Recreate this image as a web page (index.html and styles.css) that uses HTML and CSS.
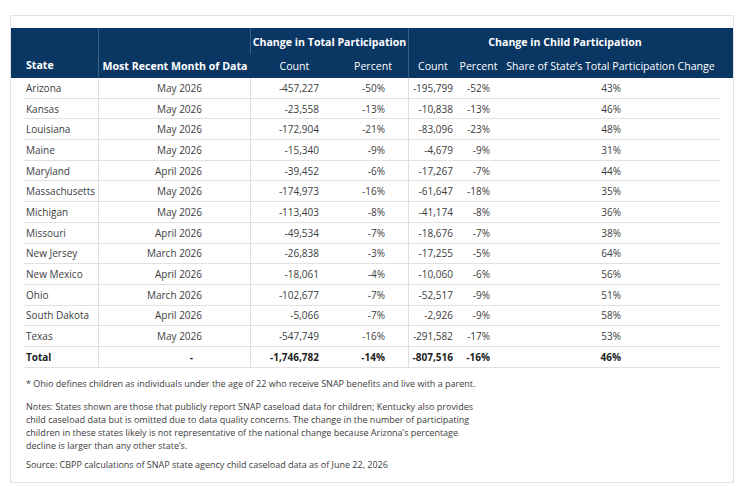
FILE: index.html
```html
<!DOCTYPE html>
<html lang="en">
<head>
    <meta charset="UTF-8">
    <meta name="viewport" content="width=device-width, initial-scale=1.0">
    <title>SNAP Child Participation</title>
    <link rel="stylesheet" href="styles.css">
</head>
<body>
    <div class="card">
        <table class="data">
            <colgroup>
                <col class="c-state">
                <col class="c-month">
                <col class="c-count">
                <col class="c-pct">
                <col class="c-ccount">
                <col class="c-cpct">
                <col class="c-share">
            </colgroup>
            <thead>
                <tr class="group-row">
                    <th rowspan="2" class="h-state edge-left sep">State</th>
                    <th class="sep"></th>
                    <th colspan="2" class="sep">Change in Total Participation</th>
                    <th colspan="3" class="edge-right">Change in Child Participation</th>
                </tr>
                <tr class="sub-row">
                    <th class="h-month">Most Recent Month of Data</th>
                    <th class="light">Count</th>
                    <th class="light sep">Percent</th>
                    <th class="light">Count</th>
                    <th class="light">Percent</th>
                    <th class="light edge-right">Share of State’s Total Participation Change</th>
                </tr>
            </thead>
            <tbody>
                <tr><td class="state">Arizona</td><td class="month">May 2026</td><td class="count">-457,227</td><td class="pct">-50%</td><td class="ccount">-195,799</td><td class="cpct">-52%</td><td class="share">43%</td></tr>
                <tr><td class="state">Kansas</td><td class="month">May 2026</td><td class="count">-23,558</td><td class="pct">-13%</td><td class="ccount">-10,838</td><td class="cpct">-13%</td><td class="share">46%</td></tr>
                <tr><td class="state">Louisiana</td><td class="month">May 2026</td><td class="count">-172,904</td><td class="pct">-21%</td><td class="ccount">-83,096</td><td class="cpct">-23%</td><td class="share">48%</td></tr>
                <tr><td class="state">Maine</td><td class="month">May 2026</td><td class="count">-15,340</td><td class="pct">-9%</td><td class="ccount">-4,679</td><td class="cpct">-9%</td><td class="share">31%</td></tr>
                <tr><td class="state">Maryland</td><td class="month">April 2026</td><td class="count">-39,452</td><td class="pct">-6%</td><td class="ccount">-17,267</td><td class="cpct">-7%</td><td class="share">44%</td></tr>
                <tr><td class="state">Massachusetts</td><td class="month">May 2026</td><td class="count">-174,973</td><td class="pct">-16%</td><td class="ccount">-61,647</td><td class="cpct">-18%</td><td class="share">35%</td></tr>
                <tr><td class="state">Michigan</td><td class="month">May 2026</td><td class="count">-113,403</td><td class="pct">-8%</td><td class="ccount">-41,174</td><td class="cpct">-8%</td><td class="share">36%</td></tr>
                <tr><td class="state">Missouri</td><td class="month">April 2026</td><td class="count">-49,534</td><td class="pct">-7%</td><td class="ccount">-18,676</td><td class="cpct">-7%</td><td class="share">38%</td></tr>
                <tr><td class="state">New Jersey</td><td class="month">March 2026</td><td class="count">-26,838</td><td class="pct">-3%</td><td class="ccount">-17,255</td><td class="cpct">-5%</td><td class="share">64%</td></tr>
                <tr><td class="state">New Mexico</td><td class="month">April 2026</td><td class="count">-18,061</td><td class="pct">-4%</td><td class="ccount">-10,060</td><td class="cpct">-6%</td><td class="share">56%</td></tr>
                <tr><td class="state">Ohio</td><td class="month">March 2026</td><td class="count">-102,677</td><td class="pct">-7%</td><td class="ccount">-52,517</td><td class="cpct">-9%</td><td class="share">51%</td></tr>
                <tr><td class="state">South Dakota</td><td class="month">April 2026</td><td class="count">-5,066</td><td class="pct">-7%</td><td class="ccount">-2,926</td><td class="cpct">-9%</td><td class="share">58%</td></tr>
                <tr><td class="state">Texas</td><td class="month">May 2026</td><td class="count">-547,749</td><td class="pct">-16%</td><td class="ccount">-291,582</td><td class="cpct">-17%</td><td class="share">53%</td></tr>
                <tr class="total"><td class="state">Total</td><td class="month dash">-</td><td class="count">-1,746,782</td><td class="pct">-14%</td><td class="ccount">-807,516</td><td class="cpct">-16%</td><td class="share">46%</td></tr>
            </tbody>
        </table>

        <div class="notes">
            <p class="note-ohio">* Ohio defines children as individuals under the age of 22 who receive SNAP benefits and live with a parent.</p>
            <p>Notes: States shown are those that publicly report SNAP caseload data for children; Kentucky also provides<br>child caseload data but is omitted due to data quality concerns. The change in the number of participating<br>children in these states likely is not representative of the national change because Arizona’s percentage<br>decline is larger than any other state’s.</p>
            <p class="source">Source: CBPP calculations of SNAP state agency child caseload data as of June 22, 2026</p>
        </div>
    </div>
</body>
</html>
```

FILE: styles.css
```css
body {
    margin: 0;
    font-family: "Open Sans", "Liberation Sans", sans-serif;
    color: #3d3d3d;
    background-color: #fff;
}

.card {
    width: 698px;
    margin: 15px 0 0 10px;
    padding: 12px 12px 11px;
    border: 1px solid #e4e4e4;
}

.data {
    width: 698px;
    table-layout: fixed;
    border-collapse: separate;
    border-spacing: 0;
    font-size: 10px;
}

.c-state { width: 76px; }
.c-month { width: 152px; }
.c-count { width: 87px; }
.c-pct { width: 71px; }
.c-ccount { width: 48px; }
.c-cpct { width: 43px; }
.c-share { width: 221px; }

/* header */
thead th {
    background-color: #0a3663;
    color: #fff;
    font-weight: 700;
    font-size: 10.6px;
    white-space: nowrap;
    padding: 0;
    text-align: center;
}

.group-row th {
    height: 25px;
    padding-top: 1px;
}

.sub-row th {
    height: 24px;
}

thead th.light {
    font-weight: 400;
}

thead th.sep {
    border-right: 1px solid #3d5f86;
}

.h-state {
    text-align: left;
    vertical-align: bottom;
    padding: 0 0 6px 3px;
    box-sizing: border-box;
}

thead th.edge-left {
    box-shadow: -12px 0 0 #0a3663;
}

thead th.edge-right {
    box-shadow: 12px 0 0 #0a3663;
}

/* body */
tbody td {
    height: 20.7px;
    padding: 0;
    white-space: nowrap;
    border-bottom: 1px solid #e2e2e2;
    box-sizing: border-box;
}

td.state {
    padding-left: 3px;
    border-right: 1px solid #dedede;
}

td.month {
    text-align: right;
    padding-right: 48px;
    border-right: 1px solid #dedede;
}

td.dash {
    padding-right: 57px;
}

td.count {
    text-align: right;
    padding-right: 19px;
}

td.pct {
    text-align: right;
    padding-right: 23px;
    border-right: 1px solid #dedede;
}

td.ccount {
    text-align: right;
    padding-right: 4px;
}

td.cpct {
    text-align: right;
    padding-right: 10px;
}

td.share {
    text-align: right;
    padding-right: 100px;
}

.total td {
    font-weight: 700;
    color: #222;
}

/* notes */
.notes {
    margin-top: 9px;
    padding-left: 3px;
    font-size: 9px;
    line-height: 13px;
}

.notes p {
    margin: 0 0 10px;
}

.notes p.source {
    margin: -4px 0 0;
}
```
